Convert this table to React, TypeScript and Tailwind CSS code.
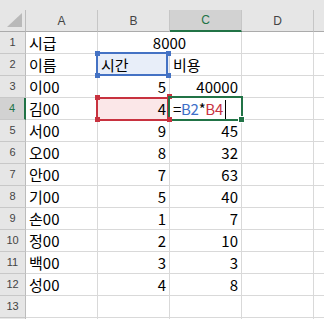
import React from "react";

const KR = '"Noto Sans CJK KR", "Noto Sans", sans-serif';

type Row = { n: number; a: string; b: string; c: string };

const rows: Row[] = [
  { n: 3, a: "이00", b: "5", c: "40000" },
  { n: 4, a: "김00", b: "4", c: "" },
  { n: 5, a: "서00", b: "9", c: "45" },
  { n: 6, a: "오00", b: "8", c: "32" },
  { n: 7, a: "안00", b: "7", c: "63" },
  { n: 8, a: "기00", b: "5", c: "40" },
  { n: 9, a: "손00", b: "1", c: "7" },
  { n: 10, a: "정00", b: "2", c: "10" },
  { n: 11, a: "백00", b: "3", c: "3" },
  { n: 12, a: "성00", b: "4", c: "8" },
  { n: 13, a: "", b: "", c: "" },
  { n: 14, a: "", b: "", c: "" },
];

function RowHead({ n, sel }: { n: number; sel?: boolean }) {
  return (
    <div
      className={
        "w-[26px] h-[22px] shrink-0 flex items-center justify-center text-[11px] border-b border-b-[#c8c8c8] " +
        (sel
          ? "bg-[#d2d2d2] text-[#217346] border-r-2 border-r-[#217346]"
          : "bg-[#e6e6e6] text-[#444444] border-r border-r-[#bcbcbc]")
      }
      style={{ fontFamily: '"Liberation Sans", Arial, sans-serif' }}
    >
      {n < 14 ? n : ""}
    </div>
  );
}

function Cell({
  children,
  right,
  bg,
}: {
  children?: React.ReactNode;
  right?: boolean;
  bg?: string;
}) {
  return (
    <div
      className={
        "w-[72px] h-[22px] shrink-0 border-r border-b border-[#d9d9d9] px-[3px] text-[15px] leading-[21px] whitespace-nowrap text-black " +
        (right ? "text-right " : "text-left ") +
        (bg ?? "")
      }
    >
      {children}
    </div>
  );
}

export default function App() {
  return (
    <div
      className="relative w-[324px] h-[319px] overflow-hidden bg-white"
      style={{ fontFamily: KR }}
    >
      {/* column header */}
      <div className="flex items-end h-[32px] bg-[#e6e6e6]">
        <div className="relative w-[26px] h-[22px] shrink-0 border-r border-r-[#bcbcbc] border-b border-b-[#ababab]">
          <svg
            className="absolute left-0 top-[-10px]"
            width="26"
            height="31"
            viewBox="0 0 26 31"
          >
            <polygon points="7,27 22,27 22,13" fill="#b9b9b9" />
          </svg>
        </div>
        {["A", "B", "C", "D", "E"].map((l) => {
          const sel = l === "C";
          return (
            <div
              key={l}
              className={
                (l === "E" ? "flex-1 " : "w-[72px] shrink-0 border-r border-r-[#c6c6c6] ") +
                "h-[22px] flex items-center justify-center text-[12px] " +
                (sel
                  ? "bg-[#d2d2d2] text-[#217346] border-b-2 border-b-[#217346]"
                  : "text-[#444444] border-b border-b-[#ababab]")
              }
              style={{ fontFamily: '"Liberation Sans", Arial, sans-serif' }}
            >
              {l === "E" ? "" : l}
            </div>
          );
        })}
      </div>

      {/* row 1 */}
      <div className="flex">
        <RowHead n={1} />
        <Cell>시급</Cell>
        <div className="w-[144px] h-[22px] shrink-0 border-r border-b border-[#d9d9d9] text-center text-[15px] leading-[21px] text-black">
          8000
        </div>
        <Cell />
        <div className="flex-1 h-[22px] border-b border-[#d9d9d9]" />
      </div>

      {/* row 2 */}
      <div className="flex">
        <RowHead n={2} />
        <Cell>이름</Cell>
        <Cell bg="bg-[#e8eef9]">시간</Cell>
        <Cell>비용</Cell>
        <Cell />
        <div className="flex-1 h-[22px] border-b border-[#d9d9d9]" />
      </div>

      {rows.map((r) => (
        <div className="flex" key={r.n}>
          <RowHead n={r.n} sel={r.n === 4} />
          <Cell>{r.a}</Cell>
          <Cell right bg={r.n === 4 ? "bg-[#fbe7e8]" : ""}>
            {r.b}
          </Cell>
          {r.n === 4 ? (
            <Cell>
              <span className="tracking-[-0.3px]">
                <span>=</span>
                <span className="text-[#3d6fc8]">B2</span>
                <span>*</span>
                <span className="text-[#c8323f]">B4</span>
              </span>
              <span className="inline-block w-[1px] h-[19px] bg-black ml-[2px] align-[-4px]" />
            </Cell>
          ) : (
            <Cell right>{r.c}</Cell>
          )}
          <Cell />
          <div className="flex-1 h-[22px] border-b border-[#d9d9d9]" />
        </div>
      ))}

      {/* B2 reference (blue) */}
      <div className="absolute left-[96px] top-[52px] w-[72px] h-[24px] border-2 border-[#4472c4] pointer-events-none" />
      <div className="absolute left-[95px] top-[51px] w-[5px] h-[5px] bg-[#4472c4]" />
      <div className="absolute left-[166px] top-[51px] w-[5px] h-[5px] bg-[#4472c4]" />
      <div className="absolute left-[95px] top-[73px] w-[5px] h-[5px] bg-[#4472c4]" />
      <div className="absolute left-[166px] top-[73px] w-[5px] h-[5px] bg-[#4472c4]" />

      {/* B4 reference (red) */}
      <div className="absolute left-[96px] top-[97px] w-[73px] h-[24px] border-2 border-[#c8323f] pointer-events-none" />
      <div className="absolute left-[95px] top-[95px] w-[5px] h-[5px] bg-[#c8323f]" />
      <div className="absolute left-[167px] top-[94px] w-[5px] h-[5px] bg-[#c8323f]" />
      <div className="absolute left-[95px] top-[117px] w-[5px] h-[5px] bg-[#c8323f]" />

      {/* C4 active cell (green) */}
      <div className="absolute left-[168px] top-[96px] w-[75px] h-[25px] border-2 border-[#217346] pointer-events-none" />
      <div className="absolute left-[167px] top-[117px] w-[5px] h-[5px] bg-[#c8323f]" />
      <div className="absolute left-[238px] top-[116px] w-[7px] h-[7px] bg-[#217346] border border-white" />
    </div>
  );
}
